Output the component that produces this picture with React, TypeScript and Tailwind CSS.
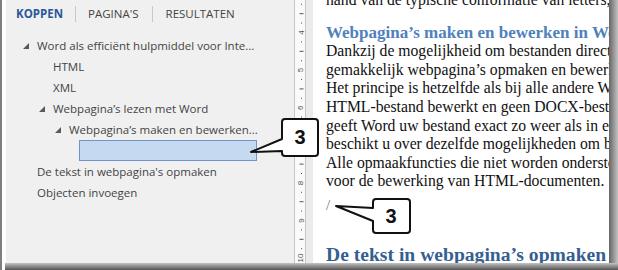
import React from 'react';

const uiFont = { fontFamily: '"Open Sans", "Liberation Sans", sans-serif' };
const serif = { fontFamily: '"Liberation Serif", serif' };

function Tri({ className = '' }: { className?: string }) {
  return (
    <svg width="6" height="6" viewBox="0 0 6 6" className={`shrink-0 ${className}`}>
      <polygon points="6,0 6,6 0,6" fill="#595959" />
    </svg>
  );
}

function TreeRow({ indent, tri, children }: { indent: number; tri?: boolean; children: React.ReactNode }) {
  return (
    <div className="flex items-center h-[21px]" style={{ paddingLeft: indent }}>
      <div className="w-[16px] flex items-center">{tri && <Tri className="ml-[2px]" />}</div>
      <span className="whitespace-nowrap">{children}</span>
    </div>
  );
}

function NavPane() {
  return (
    <div className="w-[288px] h-full bg-[#f0f0f0] text-[#444] text-[11.5px]" style={uiFont}>
      <div className="flex items-center h-[28px] pl-[10px]">
        <span className="font-bold text-[#2b579a]">KOPPEN</span>
        <span className="w-px h-[16px] bg-[#c8c8c8] mx-[12px]" />
        <span>PAGINA'S</span>
        <span className="w-px h-[16px] bg-[#c8c8c8] mx-[13px]" />
        <span>RESULTATEN</span>
      </div>
      <div className="mt-[7px]">
        <TreeRow indent={15} tri>Word als efficiënt hulpmiddel voor Inte...</TreeRow>
        <TreeRow indent={31}>HTML</TreeRow>
        <TreeRow indent={31}>XML</TreeRow>
        <TreeRow indent={31} tri>Webpagina’s lezen met Word</TreeRow>
        <TreeRow indent={47} tri>Webpagina’s maken en bewerken...</TreeRow>
        <div className="h-[21px] flex items-center pl-[73px]">
          <div className="w-[178px] h-[21px] bg-[#c5d9f1] border border-[#6f92c8]" />
        </div>
        <TreeRow indent={15}>De tekst in webpagina's opmaken</TreeRow>
        <TreeRow indent={15}>Objecten invoegen</TreeRow>
      </div>
    </div>
  );
}

function Ruler() {
  const unit = 37.6;
  const start = 32.5 - unit * 4;
  const marks: React.ReactNode[] = [];
  for (let i = 0; i <= 40; i++) {
    const y = start + (i * unit) / 4;
    if (y < -2 || y > 265) continue;
    const n = Math.floor(i / 4);
    const q = i % 4;
    if (q === 0) {
      if (n === 7) continue;
      marks.push(
        <text key={i} x={6} y={y} fontSize="8" fill="#555" textAnchor="middle" dominantBaseline="central" transform={`rotate(-90 6 ${y})`} fontFamily="Liberation Sans, sans-serif">
          {n}
        </text>
      );
    } else if (q === 2) {
      marks.push(<rect key={i} x={4.5} y={y - 0.5} width={4} height={1} fill="#555" />);
    } else {
      marks.push(<rect key={i} x={6} y={y - 0.5} width={1} height={1} fill="#555" />);
    }
  }
  return (
    <div className="w-[12px] h-full bg-[#fafafa] border-l border-r border-[#c6c6c6]">
      <svg width="10" height="263" className="block">
        {marks}
      </svg>
    </div>
  );
}

function Page() {
  const body = [
    'Dankzij de mogelijkheid om bestanden direct als webpagina',
    'gemakkelijk webpagina’s opmaken en bewerken met Word.',
    'Het principe is hetzelfde als bij alle andere Word-documenten',
    'HTML-bestand bewerkt en geen DOCX-bestand. Daarbij',
    'geeft Word uw bestand exact zo weer als in een browser',
    'beschikt u over dezelfde mogelijkheden om bestanden op te',
    'Alle opmaakfuncties die niet worden ondersteund, zijn niet',
    'voor de bewerking van HTML-documenten.',
  ];
  return (
    <div className="w-[296px] h-full bg-white overflow-hidden pl-[13px] text-[#111]" style={serif}>
      <div className="mt-[-9px] h-[18.6px] leading-[18.6px] text-[15.7px] whitespace-nowrap">
        hand van de typische conformatie van letters, punten en
      </div>
      <div className="mt-[14px] h-[18.6px] leading-[18.6px] text-[17px] font-bold text-[#4f81bd] whitespace-nowrap">
        Webpagina’s maken en bewerken in Word
      </div>
      {body.map((l) => (
        <div key={l} className="h-[18.6px] leading-[18.6px] text-[15.7px] whitespace-nowrap">
          {l}
        </div>
      ))}
      <div className="mt-[5px] h-[18.6px] leading-[18.6px] text-[15px] text-[#777] whitespace-nowrap">/</div>
      <div className="mt-[28px] h-[24px] leading-[24px] text-[19.6px] font-bold text-[#365f91] whitespace-nowrap">
        De tekst in webpagina’s opmaken
      </div>
    </div>
  );
}

function Callouts() {
  return (
    <svg width="618" height="270" className="absolute left-0 top-0 pointer-events-none">
      <path
        d="M285 119 H315 Q318 119 318 122 V153 Q318 156 315 156 H285 Q282 156 282 153 V151 L251 152 L282 139 V122 Q282 119 285 119 Z"
        fill="#fff"
        stroke="#111"
        strokeWidth="2"
        strokeLinejoin="round"
      />
      <text x="300" y="144" fontSize="20" fontWeight="bold" textAnchor="middle" fontFamily="Liberation Sans, Arial, sans-serif" fill="#111">
        3
      </text>
      <path
        d="M376 199 H407 Q410 199 410 202 V230 Q410 233 407 233 H376 Q373 233 373 230 V221 L336 206 L373 208 V202 Q373 199 376 199 Z"
        fill="#fff"
        stroke="#111"
        strokeWidth="2"
        strokeLinejoin="round"
      />
      <text x="391" y="223" fontSize="20" fontWeight="bold" textAnchor="middle" fontFamily="Liberation Sans, Arial, sans-serif" fill="#111">
        3
      </text>
    </svg>
  );
}

export default function App() {
  return (
    <div className="relative w-[618px] h-[270px] overflow-hidden bg-white">
      <div className="flex h-[263px]">
        <div className="w-[2px] bg-[#7f7f7f]" />
        <div className="w-[4px] bg-white" />
        <NavPane />
        <Ruler />
        <div className="w-[7px] bg-[#ebebeb]" />
        <Page />
        <div className="w-[9px] bg-gradient-to-r from-[#666] to-[#c4c4c4]" />
      </div>
      <div className="flex h-[7px]">
        <div className="w-[2px] bg-[#7f7f7f]" />
        <div className="w-[3px] bg-white" />
        <div className="flex-1 bg-gradient-to-b from-[#c4c4c4] to-[#555]" />
      </div>
      <Callouts />
    </div>
  );
}
